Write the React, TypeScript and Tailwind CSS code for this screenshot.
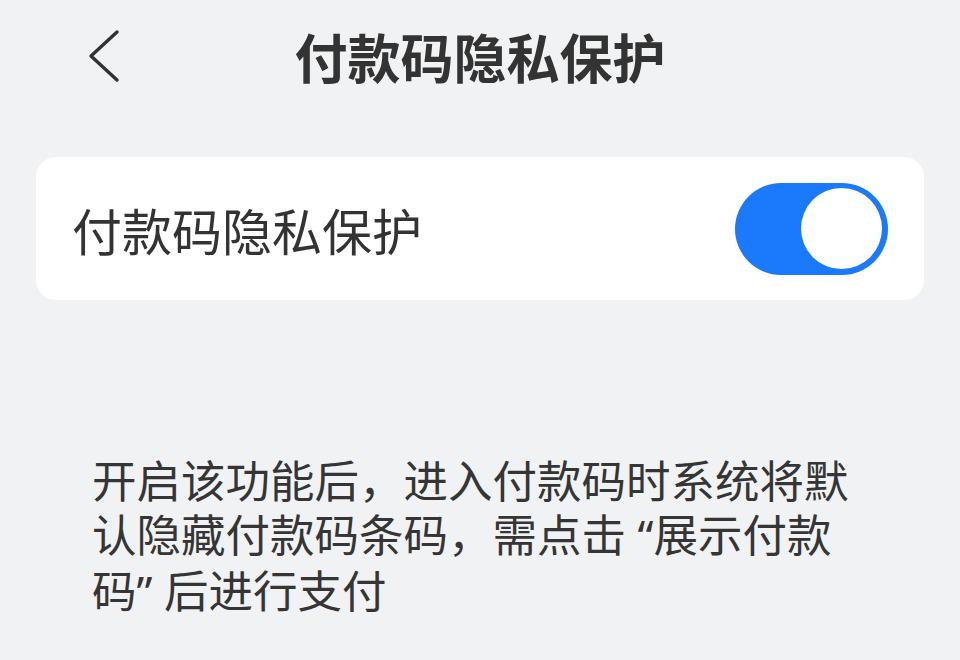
import { useState } from "react"

const cjk = { fontFamily: '"Noto Sans CJK SC", "Noto Sans", sans-serif' }
const latin = { fontFamily: '"Noto Sans", "Liberation Sans", sans-serif' }

function Toggle({ on, onChange }: { on: boolean; onChange: (v: boolean) => void }) {
    return (
        <button
            type="button"
            onClick={() => onChange(!on)}
            className={`relative flex items-center w-[153px] h-[92px] rounded-full px-[6px] transition-colors ${on ? 'bg-[#1a7afb] justify-end' : 'bg-[#d5d6d9] justify-start'}`}
        >
            <span className="block w-[81px] h-[81px] rounded-full bg-white" />
        </button>
    )
}

export default function App() {
    const [enabled, setEnabled] = useState(true)

    return (
        <div className="w-[960px] h-[660px] bg-[#f1f2f4] text-[#333333] overflow-hidden" style={cjk}>
            <div className="grid grid-cols-[1fr_auto_1fr] items-center h-[112px]">
                <div className="pl-[86px]">
                    <svg width="34" height="54" viewBox="0 0 34 54" fill="none">
                        <path d="M31 3 L5 27 L31 51" stroke="#333333" strokeWidth="3.4" strokeLinecap="round" strokeLinejoin="round" />
                    </svg>
                </div>
                <h1 className="text-[53px] font-bold leading-none">付款码隐私保护</h1>
                <div />
            </div>

            <div className="mx-[36px] mt-[45px] h-[143px] bg-white rounded-[20px] flex items-center justify-between pl-[36px] pr-[36px]">
                <span className="text-[50px] leading-none">付款码隐私保护</span>
                <Toggle on={enabled} onChange={setEnabled} />
            </div>

            <div className="mt-[152px] pl-[92px] text-[44.5px] leading-[54px] text-[#353535]">
                <div>开启该功能后，进入付款码时系统将默</div>
                <div>认隐藏付款码条码，需点击<span style={latin}> “</span>展示付款</div>
                <div>码<span style={latin}>” </span>后进行支付</div>
            </div>
        </div>
    )
}
